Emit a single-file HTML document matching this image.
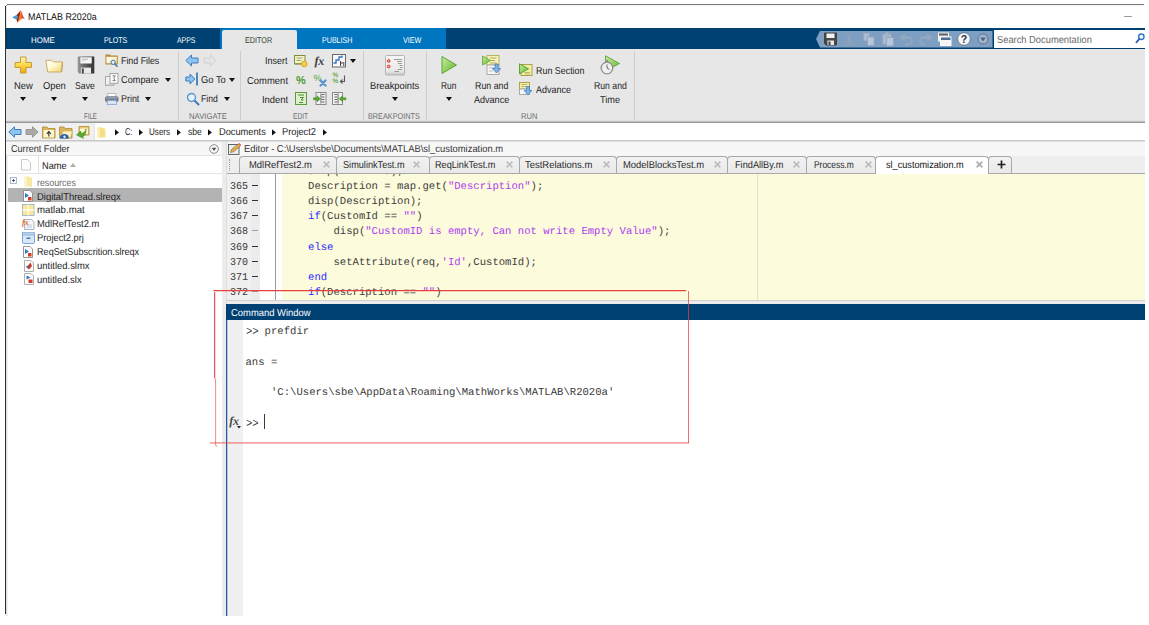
<!DOCTYPE html>
<html>
<head>
<meta charset="utf-8">
<title>MATLAB R2020a</title>
<style>
html,body{margin:0;padding:0;background:#fff;}
body{width:1149px;height:625px;position:relative;overflow:hidden;font-family:"Liberation Sans",sans-serif;font-size:10px;color:#222;}
.g{position:absolute;left:0;top:0;width:0;height:0;}
.b{position:absolute;}
svg{position:absolute;overflow:visible;}
.t{position:absolute;white-space:pre;transform-origin:0 50%;text-rendering:geometricPrecision;}
.arr{position:absolute;width:0;height:0;border-left:3.5px solid transparent;border-right:3.5px solid transparent;border-top:4px solid #111;}
.sep{position:absolute;top:51px;width:1px;height:69px;background:#cdcdcd;}
.kw{color:#2a2aff;}
.str{color:#ad3cf2;}
</style>
</head>
<body>

<!-- ===== window frame + title bar ===== -->
<div class="g" id="titlebar">
  <div class="b" style="left:7px;top:4px;width:1137px;height:1px;background:#7a7a7a;"></div>
  <div class="b" style="left:6px;top:5px;width:1px;height:1px;background:#8f8f8f;z-index:6;"></div>
  <div class="b" style="left:5px;top:6px;width:1px;height:608px;background:#303030;z-index:5;"></div>
  <div class="b" style="left:6px;top:5px;width:1139px;height:1px;background:#f4f4f4;"></div>
  <div class="b" style="left:6px;top:6px;width:1px;height:22px;background:#e8e8e8;"></div>
  <svg style="left:12px;top:9px" width="14" height="14" viewBox="0 0 14 14">
    <path d="M0.200 8.200 L4.500 6 L6 7.500 L4.500 10.600 L2 9.600 Z" fill="#4a9bd8"/>
    <path d="M4.500 6 C6.500 4.500 7.800 2.500 8.600 1 L8.300 7 L6.500 11.500 L5.300 13.500 L4.500 10.600 L6 7.500 Z" fill="#8e2418"/>
    <path d="M8.600 1 L10.200 7 L8.200 11 C7 12.500 6 13.500 5.300 13.500 C7 10 8 5 8.600 1 Z" fill="#f0892a"/>
    <path d="M8.600 1 C9.800 3.500 11 7.500 13 10.600 C11.800 9.800 11 9 10.200 9.300 L8.200 11 L9.600 7 Z" fill="#d9482c"/>
  </svg>
  <div class="t" style="left:28.0px;top:11.1px;font-size:9.7px;line-height:13px;color:#101010;transform:scaleX(0.919);">MATLAB R2020a</div>
  <div class="b" style="left:1124px;top:15.5px;width:8px;height:1px;background:#9c9c9c;"></div>
</div>

<!-- ===== toolstrip tab bar ===== -->
<div class="g" id="tabbar">
  <div class="b" style="left:6px;top:28px;width:1139px;height:21px;background:#004174;"></div>
  <div class="b" style="left:220px;top:28px;width:226px;height:21px;background:#0076c0;"></div>
  <div class="b" style="left:222px;top:30px;width:75px;height:19px;background:#e7e7e7;border-radius:2px 2px 0 0;"></div>
  <div class="t" style="left:30.8px;top:34.9px;font-size:8.4px;line-height:11px;color:#ffffff;transform:scaleX(0.949);">HOME</div><div class="t" style="left:103.8px;top:34.9px;font-size:8.4px;line-height:11px;color:#ffffff;transform:scaleX(0.849);">PLOTS</div><div class="t" style="left:176.8px;top:34.9px;font-size:8.4px;line-height:11px;color:#ffffff;transform:scaleX(0.820);">APPS</div><div class="t" style="left:245.4px;top:34.9px;font-size:8.4px;line-height:11px;color:#3a3a3a;transform:scaleX(0.865);">EDITOR</div><div class="t" style="left:322.2px;top:34.9px;font-size:8.4px;line-height:11px;color:#ffffff;transform:scaleX(0.849);">PUBLISH</div><div class="t" style="left:402.8px;top:34.9px;font-size:8.4px;line-height:11px;color:#ffffff;transform:scaleX(0.856);">VIEW</div>
  <!-- quick access toolbar -->
  <svg style="left:814px;top:30px" width="180" height="19" viewBox="0 0 180 19">
    <path d="M2 9 L6 1 H178.500 V17.500 H6 Z" fill="#7f9fc2"/>
    <!-- save -->
    <g transform="translate(10,2.500)">
      <path d="M0.500 0.500 H12.500 V12.500 H2 L0.500 11 Z" fill="#4a4a4a" stroke="#333" stroke-width="0.800"/>
      <rect x="2.500" y="1" width="8" height="4.500" fill="#f2f2f2"/>
      <rect x="3.500" y="8" width="6.500" height="4.500" fill="#e6e6e6"/>
      <rect x="4.500" y="9" width="2" height="3.500" fill="#444"/>
    </g>
    <!-- cut -->
    <g transform="translate(30,3)" stroke="#90a4bc" stroke-width="1.200" fill="none">
      <path d="M7.500 0 L3.500 9 M3 0.500 L6.800 9"/><circle cx="2.800" cy="10.800" r="1.800"/><circle cx="7.800" cy="10.800" r="1.800"/>
    </g>
    <!-- copy -->
    <g transform="translate(49,2.500)" fill="#a9bbd0" stroke="#8fa3bb" stroke-width="0.800">
      <rect x="0.500" y="0.500" width="6" height="8"/><rect x="4.500" y="4.500" width="6.500" height="8.500" fill="#b7c7d9"/>
    </g>
    <!-- paste -->
    <g transform="translate(68,2)" fill="#a9bbd0" stroke="#8fa3bb" stroke-width="0.800">
      <rect x="0.500" y="2" width="9" height="10.500"/><rect x="3" y="0.500" width="4" height="2.500"/><rect x="4.500" y="5.500" width="7" height="8.500" fill="#b7c7d9"/>
    </g>
    <!-- undo -->
    <g transform="translate(86,3.500)" fill="none" stroke="#93a8c0" stroke-width="1.800">
      <path d="M3 4 H8.500 A3.500 3.500 0 0 1 8.500 11 H5"/><path d="M4.500 0.800 L1 4 L4.500 7.200" stroke-width="1.400" fill="#93a8c0"/>
    </g>
    <!-- redo -->
    <g transform="translate(104,3.500)" fill="none" stroke="#93a8c0" stroke-width="1.800">
      <path d="M10.500 4 H5.500 A3.500 3.500 0 0 0 5.500 11 H7"/><path d="M9.500 0.800 L13 4 L9.500 7.200" stroke-width="1.400" fill="#93a8c0"/>
    </g>
    <!-- windows -->
    <g transform="translate(124,2.500)">
      <rect x="0.500" y="0.500" width="10" height="8" fill="#e9e9e9" stroke="#f6f6f6"/>
      <rect x="1" y="1" width="9" height="2" fill="#5f5f5f"/>
      <rect x="2.500" y="4.500" width="10.500" height="8.500" fill="#f3f3f3" stroke="#fafafa"/>
      <rect x="3" y="5" width="9.500" height="2.500" fill="#4f6f9a"/>
    </g>
    <!-- help -->
    <g transform="translate(143,2)">
      <circle cx="7" cy="7" r="6.300" fill="#f7f7f7" stroke="#5b6b80" stroke-width="0.800"/>
      <text x="7" y="10.800" text-anchor="middle" font-family="Liberation Sans, sans-serif" font-weight="bold" font-size="10.500" fill="#1c2f50">?</text>
    </g>
    <!-- dropdown -->
    <g transform="translate(163.500,3.500)">
      <circle cx="5.500" cy="5.500" r="5" fill="#a3b6cc" stroke="#5e7592" stroke-width="1"/>
      <path d="M2.800 4 H8.200 L5.500 8 Z" fill="#4e6482"/>
    </g>
  </svg>
  <!-- search box -->
  <div class="b" style="left:994px;top:30px;width:151px;height:17.500px;background:#fff;"></div>
  <div class="t" style="left:996.8px;top:34.2px;font-size:10.2px;line-height:13px;color:#6a6a6a;transform:scaleX(0.915);">Search Documentation</div>
  <svg style="left:1135px;top:33px" width="10" height="11" viewBox="0 0 10 11">
    <circle cx="6.300" cy="3.800" r="2.700" fill="none" stroke="#2f79c7" stroke-width="1.500"/>
    <path d="M4.200 6.200 L1.400 9.300" stroke="#2f5fae" stroke-width="1.800" stroke-linecap="round"/>
  </svg>
  <div class="b" style="left:1145px;top:0;width:4px;height:625px;background:#fff;"></div>
</div>

<!-- ===== toolstrip (EDITOR tab) ===== -->
<div class="g" id="toolstrip">
  <div class="b" style="left:6px;top:49px;width:1139px;height:72px;background:#e7e7e7;"></div>
  <div class="b" style="left:6px;top:120px;width:1139px;height:1px;background:#e0e0e0;"></div>
  <div class="b" style="left:6px;top:121px;width:1139px;height:1px;background:#bdbdbd;"></div>
  <div class="b" style="left:6px;top:122px;width:1139px;height:1px;background:#9a9a9a;"></div>

  <!-- FILE -->
  <div class="g" id="grp-file">
    <svg style="left:14px;top:56px" width="19" height="18" viewBox="0 0 19 18">
      <defs><linearGradient id="gy" x1="0" y1="0" x2="0" y2="1"><stop offset="0" stop-color="#fff6c0"/><stop offset="0.500" stop-color="#fbd84a"/><stop offset="1" stop-color="#e9a90c"/></linearGradient></defs>
      <path d="M6.500 1 H12 V6.500 H17.500 V11.500 H12 V17 H6.500 V11.500 H1 V6.500 H6.500 Z" fill="url(#gy)" stroke="#c99a35" stroke-width="1" stroke-linejoin="round"/>
    </svg>
    <svg style="left:45px;top:59px" width="19" height="14" viewBox="0 0 19 14">
      <defs><linearGradient id="gf" x1="0" y1="0" x2="1" y2="1"><stop offset="0" stop-color="#ffffff"/><stop offset="0.450" stop-color="#fff8cf"/><stop offset="1" stop-color="#efd36c"/></linearGradient></defs>
      <path d="M16.200 3.200 H18 L17.200 13 H15.800 Z" fill="#b99550"/>
      <path d="M0.900 1.300 H6.800 L8.300 2.900 H17.300 L16.200 13 H2.700 Z" fill="url(#gf)" stroke="#c7a555" stroke-width="0.900" stroke-linejoin="round"/>
    </svg>
    <svg style="left:76.500px;top:56px" width="18" height="18" viewBox="0 0 18 18">
      <defs><linearGradient id="gs" x1="0" y1="0" x2="1" y2="0"><stop offset="0" stop-color="#9a9a9a"/><stop offset="0.350" stop-color="#6a6a6a"/><stop offset="1" stop-color="#333333"/></linearGradient></defs>
      <path d="M0.700 0.500 H17.300 V17.500 H2.200 L0.700 16 Z" fill="url(#gs)"/>
      <rect x="3.300" y="1.300" width="11.400" height="6.200" fill="#f7f7f7"/>
      <rect x="4.600" y="2.800" width="6.500" height="0.900" fill="#b0b0b0"/>
      <rect x="4.600" y="4.600" width="4" height="0.800" fill="#cfcfcf"/>
      <rect x="3.800" y="11.600" width="10.200" height="5.900" fill="#e9e9e9"/>
      <rect x="4.800" y="12.400" width="2" height="5.100" fill="#4a4a4a"/>
    </svg>
<div class="t" style="left:13.8px;top:80.0px;font-size:10.0px;line-height:13px;color:#1e1e1e;transform:scaleX(0.939);">New</div><div class="t" style="left:42.8px;top:80.0px;font-size:10.0px;line-height:13px;color:#1e1e1e;transform:scaleX(0.932);">Open</div><div class="t" style="left:74.8px;top:80.0px;font-size:10.0px;line-height:13px;color:#1e1e1e;transform:scaleX(0.869);">Save</div><div class="arr" style="left:20px;top:97px;"></div><div class="arr" style="left:51px;top:97px;"></div><div class="arr" style="left:82px;top:97px;"></div>
    <svg style="left:105px;top:53.500px" width="14" height="13" viewBox="0 0 14 13">
      <defs><linearGradient id="gff" x1="0" y1="0" x2="1" y2="1"><stop offset="0" stop-color="#ffffff"/><stop offset="1" stop-color="#f6e39a"/></linearGradient></defs>
      <path d="M0.400 0.500 H5 L6 1.600 H12.800 V10.400 H0.400 Z" fill="#b98d3d"/>
      <path d="M1.400 2.800 H11.800 V9.300 H1.400 Z" fill="url(#gff)"/>
      <circle cx="8.200" cy="8.300" r="2.100" fill="#e3f0fb" stroke="#3b78b8" stroke-width="1"/>
      <path d="M9.900 10 L12 12.200" stroke="#3b78b8" stroke-width="1.500" stroke-linecap="round"/>
    </svg>
<div class="t" style="left:121.3px;top:55.2px;font-size:10.0px;line-height:13px;color:#1e1e1e;transform:scaleX(0.883);">Find Files</div>
    <svg style="left:105px;top:72.500px" width="14" height="14" viewBox="0 0 14 14">
      <rect x="0.500" y="3.500" width="8.500" height="9" fill="#f1f1f1" stroke="#a3a3a3" stroke-width="0.900"/>
      <rect x="1.500" y="11" width="6.500" height="1.500" fill="#c9c9c9"/>
      <rect x="5" y="0.500" width="8" height="9.800" fill="#fbfbfb" stroke="#9a9a9a" stroke-width="0.900"/>
      <path d="M7.500 2.800 H10.300 L8.600 5.200 L10.300 7.600 H7.500" fill="none" stroke="#6f6f6f" stroke-width="0.900"/>
    </svg>
<div class="t" style="left:121.3px;top:74.3px;font-size:10.0px;line-height:13px;color:#1e1e1e;transform:scaleX(0.919);">Compare</div><div class="arr" style="left:164.5px;top:78px;"></div>
    <svg style="left:105px;top:92.500px" width="14" height="12" viewBox="0 0 14 12">
      <rect x="2.800" y="0.400" width="8" height="4" fill="#ffffff" stroke="#9fb0c4" stroke-width="0.800"/>
      <rect x="0.500" y="3.700" width="12.600" height="5" rx="1.300" fill="#76808f" stroke="#5f6978" stroke-width="0.700"/>
      <rect x="1.200" y="4.400" width="11.200" height="1" fill="#a9b3c1"/>
      <rect x="2.300" y="7.600" width="9" height="4" fill="#d7e6f5" stroke="#86a6c9" stroke-width="0.800"/>
    </svg>
<div class="t" style="left:121.3px;top:93.3px;font-size:10.0px;line-height:13px;color:#1e1e1e;transform:scaleX(0.890);">Print</div><div class="arr" style="left:145px;top:97px;"></div><div class="t" style="left:83.8px;top:110.8px;font-size:8.4px;line-height:11px;color:#6b6b6b;transform:scaleX(0.725);">FILE</div>
  </div>
  <div class="sep" style="left:178px;"></div>

  <!-- NAVIGATE -->
  <div class="g" id="grp-nav">
    <svg style="left:185px;top:54px" width="14" height="13" viewBox="0 0 14 13">
      <path d="M0.800 6.500 L6.500 1 V4 H13 V9 H6.500 V12 Z" fill="#8fc4ee" stroke="#3c7fc0" stroke-width="1" stroke-linejoin="round"/>
    </svg>
    <svg style="left:203px;top:54px" width="14" height="13" viewBox="0 0 14 13">
      <path d="M13.200 6.500 L7.500 1 V4 H1 V9 H7.500 V12 Z" fill="#e4e4e4" stroke="#d2d2d2" stroke-width="1" stroke-linejoin="round"/>
    </svg>
    <svg style="left:185px;top:72px" width="14" height="14" viewBox="0 0 14 14">
      <path d="M9.800 7 L5 2 V5 H0.800 V9 H5 V12 Z" fill="#8fc4ee" stroke="#3c7fc0" stroke-width="1" stroke-linejoin="round"/>
      <rect x="11" y="0.500" width="2" height="13" fill="#4b87c4"/>
    </svg>
<div class="t" style="left:200.8px;top:74.3px;font-size:10.0px;line-height:13px;color:#1e1e1e;transform:scaleX(0.936);">Go To</div><div class="arr" style="left:228.5px;top:78px;"></div>
    <svg style="left:185.500px;top:92px" width="14" height="14" viewBox="0 0 14 14">
      <circle cx="5.500" cy="5.500" r="4" fill="#e6f2fc" stroke="#5b96d2" stroke-width="1.400"/>
      <path d="M8.600 8.600 L12.500 12.500" stroke="#3f78b8" stroke-width="2" stroke-linecap="round"/>
    </svg>
<div class="t" style="left:200.8px;top:93.3px;font-size:10.0px;line-height:13px;color:#1e1e1e;transform:scaleX(0.864);">Find</div><div class="arr" style="left:223.5px;top:97px;"></div><div class="t" style="left:188.8px;top:110.8px;font-size:8.4px;line-height:11px;color:#6b6b6b;transform:scaleX(0.920);">NAVIGATE</div>
  </div>
  <div class="sep" style="left:240px;"></div>

  <!-- EDIT -->
  <div class="g" id="grp-edit">
<div class="t" style="left:265.4px;top:55.3px;font-size:10.0px;line-height:13px;color:#1e1e1e;transform:scaleX(0.899);">Insert</div><div class="t" style="left:246.9px;top:74.6px;font-size:10.0px;line-height:13px;color:#1e1e1e;transform:scaleX(0.946);">Comment</div><div class="t" style="left:261.8px;top:93.5px;font-size:10.0px;line-height:13px;color:#1e1e1e;transform:scaleX(0.938);">Indent</div>
    <!-- insert section -->
    <svg style="left:294px;top:54px" width="14" height="14" viewBox="0 0 14 14">
      <rect x="0.500" y="1.500" width="10.500" height="8" fill="#f2f4c8" stroke="#7c8f3c"/>
      <path d="M2.500 4 H8.500 M2.500 6.500 H7" stroke="#9aa36a" stroke-width="1"/>
      <rect x="0.500" y="9.500" width="10.500" height="1.500" fill="#a7b07c"/>
      <circle cx="10.300" cy="10" r="2.800" fill="#f7cf45" stroke="#d29d1c" stroke-width="0.800"/>
    </svg>
    <div class="t" style="left:314.500px;top:52.500px;font-family:'Liberation Serif',serif;font-style:italic;font-weight:bold;font-size:12px;line-height:16px;color:#3a3a3a;letter-spacing:-0.300px;">fx</div>
    <svg style="left:331.500px;top:54px" width="14" height="14" viewBox="0 0 14 14">
      <rect x="0.500" y="0.500" width="13" height="12.500" fill="#f8f8f8" stroke="#6a6a6a"/>
      <path d="M1.500 9 H4 V6 H7 V3 H10 V1.500" fill="none" stroke="#3f78c6" stroke-width="1.400"/>
      <path d="M8.500 7 V12 M8.500 9 H11 M11.800 8 V12" stroke="#444" stroke-width="1"/>
    </svg>
<div class="arr" style="left:350px;top:59px;"></div>
    <!-- comment icons -->
    <div class="t" style="left:295.500px;top:74px;font-weight:bold;font-size:11.500px;line-height:14px;color:#4c9a2c;transform:scaleX(0.95);">%</div>
    <div class="t" style="left:313.500px;top:72px;font-weight:bold;font-size:9px;line-height:12px;color:#86b96f;">%</div>
    <svg style="left:319px;top:78.500px" width="8" height="8" viewBox="0 0 8 8">
      <path d="M1.500 1.500 L6.500 6.500 M6.500 1.500 L1.500 6.500" stroke="#5a8fca" stroke-width="2.300" stroke-linecap="round"/>
    </svg>
    <div class="t" style="left:332.500px;top:72.500px;font-weight:bold;font-size:6.500px;line-height:6px;color:#6aaa4c;">%<br>%</div>
    <svg style="left:339px;top:75px" width="7" height="10" viewBox="0 0 7 10">
      <path d="M5.500 0.500 V6.500 H1.500 M3.500 4.500 L1.500 6.500 L3.500 8.500" fill="none" stroke="#555" stroke-width="1.100"/>
    </svg>
    <!-- indent icons -->
    <svg style="left:294.500px;top:92px" width="13" height="14" viewBox="0 0 13 14">
      <rect x="0.500" y="0.500" width="11" height="12" fill="#dff0cf" stroke="#5a9c38"/>
      <path d="M3 3 H9 M5 5.500 H8.500 L6 8 H8.500 M4 10.500 H8" fill="none" stroke="#4a8c2e" stroke-width="1"/>
    </svg>
    <svg style="left:312.500px;top:92px" width="14" height="14" viewBox="0 0 14 14">
      <rect x="3" y="0.500" width="10" height="12" fill="#f1f1f1" stroke="#8a8a8a"/>
      <path d="M9 2.500 H11.500 M9 5 H11.500 M9 7.500 H11.500 M9 10 H11.500 M8 1.500 V11.500" stroke="#555" stroke-width="0.900"/>
      <path d="M0.500 5.800 H4 V3.800 L7.500 6.800 L4 9.800 V7.800 H0.500 Z" fill="#5aa832" stroke="#3f8a22" stroke-width="0.500"/>
    </svg>
    <svg style="left:331.500px;top:92px" width="15" height="14" viewBox="0 0 15 14">
      <rect x="0.500" y="0.500" width="10" height="12" fill="#f1f1f1" stroke="#8a8a8a"/>
      <path d="M2.500 2.500 H5 M2.500 5 H5 M2.500 7.500 H5 M2.500 10 H5 M6 1.500 V11.500" stroke="#555" stroke-width="0.900"/>
      <path d="M14 5.800 H10.500 V3.800 L7 6.800 L10.500 9.800 V7.800 H14 Z" fill="#5aa832" stroke="#3f8a22" stroke-width="0.500"/>
    </svg>
<div class="t" style="left:292.5px;top:110.8px;font-size:8.4px;line-height:11px;color:#6b6b6b;transform:scaleX(0.793);">EDIT</div>
  </div>
  <div class="sep" style="left:363px;"></div>


  <!-- BREAKPOINTS -->
  <div class="g" id="grp-bp">
    <svg style="left:385px;top:55px" width="21" height="21" viewBox="0 0 21 21">
      <defs><linearGradient id="gb" x1="0" y1="0" x2="0" y2="1"><stop offset="0" stop-color="#f6f6f6"/><stop offset="0.800" stop-color="#e9e9e9"/><stop offset="1" stop-color="#c4c4c4"/></linearGradient></defs>
      <rect x="0.500" y="0.500" width="19" height="19.500" rx="1" fill="url(#gb)" stroke="#b4b4b4"/>
      <circle cx="3.700" cy="6" r="1.400" fill="#f0a29b" stroke="#d8372c" stroke-width="0.900"/>
      <circle cx="3.700" cy="11.500" r="1.400" fill="#f0a29b" stroke="#d8372c" stroke-width="0.900"/>
      <path d="M9 4.500 H17 M12 6.500 H17 M13 8.500 H17 M14.500 10.500 H17.500 M15 12.500 H17.500 M12.500 14.500 H17 M9.500 16.500 H14" stroke="#858585" stroke-width="0.800"/>
    </svg>
<div class="t" style="left:370.3px;top:79.8px;font-size:10.0px;line-height:13px;color:#1e1e1e;transform:scaleX(0.933);">Breakpoints</div><div class="arr" style="left:392px;top:97px;"></div><div class="t" style="left:367.8px;top:110.8px;font-size:8.4px;line-height:11px;color:#6b6b6b;transform:scaleX(0.870);">BREAKPOINTS</div>
  </div>
  <div class="sep" style="left:426px;"></div>
  <!-- RUN -->
  <div class="g" id="grp-run">
    <svg style="left:441px;top:55px" width="17" height="20" viewBox="0 0 17 20">
      <defs><linearGradient id="gg" x1="0" y1="0" x2="1" y2="1"><stop offset="0" stop-color="#c9ec9c"/><stop offset="1" stop-color="#62b52e"/></linearGradient></defs>
      <path d="M1 1.500 L15.500 10 L1 18.500 Z" fill="url(#gg)" stroke="#5ca336" stroke-width="1" stroke-linejoin="round"/>
    </svg>
<div class="t" style="left:441.3px;top:79.8px;font-size:10.0px;line-height:13px;color:#1e1e1e;transform:scaleX(0.833);">Run</div><div class="arr" style="left:446px;top:97px;"></div>
    <svg style="left:482px;top:55px" width="20" height="21" viewBox="0 0 20 21">
      <rect x="5" y="0.500" width="12" height="9.500" fill="#f6f3b4" stroke="#b8b35a"/>
      <path d="M8 3 H14.500 M8 5.500 H13 M8 8 H14.500" stroke="#a8a36a" stroke-width="0.900"/>
      <rect x="5" y="10" width="12" height="9.500" fill="#f6f6f6" stroke="#a9a9a9"/>
      <path d="M7 13 H12 M7 16 H11" stroke="#b5b5b5" stroke-width="0.900"/>
      <path d="M0.500 1 L8.500 5.500 L0.500 10 Z" fill="url(#gg)" stroke="#5ca336" stroke-width="0.800"/>
      <path d="M13 9 H16 V13.500 H18.500 L14.500 18 L10.500 13.500 H13 Z" fill="#7db5e8" stroke="#3c7cc0" stroke-width="0.800"/>
    </svg>
<div class="t" style="left:475.0px;top:79.8px;font-size:10.0px;line-height:13px;color:#1e1e1e;transform:scaleX(0.883);">Run and</div><div class="t" style="left:474.4px;top:93.5px;font-size:10.0px;line-height:13px;color:#1e1e1e;transform:scaleX(0.904);">Advance</div>
    <svg style="left:519px;top:62.500px" width="14" height="14" viewBox="0 0 14 14">
      <rect x="2" y="1.500" width="11" height="11" fill="#f3efa6" stroke="#a9a548"/>
      <path d="M5 9.500 H11 M6 11 H11" stroke="#b3ae62" stroke-width="0.800"/>
      <path d="M0.500 0.800 L9.500 5.800 L0.500 10.800 Z" fill="url(#gg)" stroke="#4f9a2c" stroke-width="0.900"/>
    </svg>
<div class="t" style="left:535.5px;top:65.0px;font-size:10.0px;line-height:13px;color:#1e1e1e;transform:scaleX(0.890);">Run Section</div>
    <svg style="left:519px;top:81.500px" width="14" height="14" viewBox="0 0 14 14">
      <rect x="0.500" y="0.500" width="10" height="6.500" fill="#f3efa6" stroke="#a9a548"/>
      <path d="M2.500 2.500 H8 M2.500 4.500 H7" stroke="#a8a36a" stroke-width="0.800"/>
      <rect x="0.500" y="7" width="10" height="5.500" fill="#f6f6f6" stroke="#a9a9a9"/>
      <path d="M7.500 4.500 H10.500 V8.500 H12.800 L9 12.800 L5.200 8.500 H7.500 Z" fill="#7db5e8" stroke="#3c7cc0" stroke-width="0.800"/>
    </svg>
<div class="t" style="left:535.5px;top:84.0px;font-size:10.0px;line-height:13px;color:#1e1e1e;transform:scaleX(0.897);">Advance</div>
    <svg style="left:600px;top:55px" width="21" height="21" viewBox="0 0 21 21">
      <path d="M5.500 0.800 L19.500 8.500 L5.500 16 Z" fill="url(#gg)" stroke="#5ca336" stroke-width="0.900"/>
      <circle cx="7" cy="13" r="5.800" fill="#efefef" stroke="#8f8f8f" stroke-width="1.300"/>
      <rect x="5.800" y="5" width="2.400" height="2" fill="#8f8f8f"/>
      <path d="M7 9.500 V13 L9.500 14.500" fill="none" stroke="#666" stroke-width="1"/>
    </svg>
<div class="t" style="left:593.8px;top:79.8px;font-size:10.0px;line-height:13px;color:#1e1e1e;transform:scaleX(0.867);">Run and</div><div class="t" style="left:600.0px;top:93.5px;font-size:10.0px;line-height:13px;color:#1e1e1e;transform:scaleX(0.915);">Time</div><div class="t" style="left:520.7px;top:110.8px;font-size:8.4px;line-height:11px;color:#6b6b6b;transform:scaleX(0.900);">RUN</div>
  </div>
  <div class="sep" style="left:634px;"></div>

</div>

<!-- ===== current folder address bar ===== -->
<div class="g" id="addressbar">
  <div class="b" style="left:6px;top:123px;width:1139px;height:17px;background:#fff;"></div>
  <div class="b" style="left:6px;top:123px;width:88px;height:18px;background:#f0f0f0;"></div>
  <div class="b" style="left:94px;top:123px;width:1px;height:17px;background:#e4e4e4;"></div>
  <div class="b" style="left:6px;top:140px;width:1139px;height:1px;background:#c9c9c9;"></div>
  <div class="b" style="left:6px;top:141px;width:1139px;height:1px;background:#dcdcdc;z-index:3;"></div>
  <svg style="left:8px;top:126px" width="14" height="12" viewBox="0 0 14 12">
    <path d="M0.800 6 L6.500 0.800 V3.500 H13 V8.500 H6.500 V11.200 Z" fill="#8fc4ee" stroke="#3c7fc0" stroke-width="1" stroke-linejoin="round"/>
  </svg>
  <svg style="left:24.500px;top:126px" width="14" height="12" viewBox="0 0 14 12">
    <path d="M13.200 6 L7.500 0.800 V3.500 H1 V8.500 H7.500 V11.200 Z" fill="#a9a9a9" stroke="#989898" stroke-width="1" stroke-linejoin="round"/>
  </svg>
  <svg style="left:42px;top:125.500px" width="14" height="13" viewBox="0 0 14 13">
    <path d="M0.500 1 H5 L6 2.500 H13 V12 H0.500 Z" fill="#d9b65e" stroke="#b18a35" stroke-width="0.800"/>
    <rect x="1.500" y="4" width="10.500" height="7.500" fill="#fff7cf"/>
    <path d="M6.800 10.500 V6 M4.800 7.800 L6.800 5.500 L8.800 7.800" fill="none" stroke="#333" stroke-width="1.100"/>
  </svg>
  <svg style="left:59px;top:125.500px" width="14" height="13" viewBox="0 0 14 13">
    <path d="M0.500 1 H5 L6 2.500 H13 V12 H0.500 Z" fill="#d9b65e" stroke="#b18a35" stroke-width="0.800"/>
    <path d="M2 12 L4 5 H13.500 L11.500 12 Z" fill="#fff3bd" stroke="#c9a64f" stroke-width="0.600"/>
    <path d="M1 12.500 A4.500 4.500 0 0 1 10 12.500 Z" fill="#1f5fae"/>
    <circle cx="5.500" cy="10.800" r="1.200" fill="#e8f1fb"/>
  </svg>
  <svg style="left:76px;top:125.500px" width="14" height="13" viewBox="0 0 14 13">
    <path d="M3 0.500 H13 V9 H3 Z" fill="#e7c877" stroke="#b18a35" stroke-width="0.800"/>
    <path d="M4 2.500 H12 V8 H4 Z" fill="#fff7cf"/>
    <path d="M0.500 9 L4.500 5 L5.500 7.500 C8 7 9.500 5 10 3 C10.500 7 8.500 10.500 6.500 11 L7.500 12.500 Z" fill="#5aa832" stroke="#3f8a22" stroke-width="0.500"/>
  </svg>
  <svg style="left:96.500px;top:126.500px" width="9" height="11" viewBox="0 0 9 11">
    <path d="M0.500 0.500 H5 L6 1.500 H8.300 V10.500 H0.500 Z" fill="#f7dd83"/>
    <path d="M0.500 0.500 H3 V10.500 H0.500 Z" fill="#fbeeb5"/>
  </svg>
<svg style="left:114.5px;top:128.800px" width="4" height="7" viewBox="0 0 4 7"><path d="M0 0.200 L3.900 3.400 L0 6.600 Z" fill="#111"/></svg><div class="t" style="left:124.6px;top:126.4px;font-size:10.0px;line-height:13px;color:#1e1e1e;transform:scaleX(0.740);">C:</div><svg style="left:138.5px;top:128.800px" width="4" height="7" viewBox="0 0 4 7"><path d="M0 0.200 L3.900 3.400 L0 6.600 Z" fill="#111"/></svg><div class="t" style="left:149.0px;top:126.4px;font-size:10.0px;line-height:13px;color:#1e1e1e;transform:scaleX(0.808);">Users</div><svg style="left:177px;top:128.800px" width="4" height="7" viewBox="0 0 4 7"><path d="M0 0.200 L3.900 3.400 L0 6.600 Z" fill="#111"/></svg><div class="t" style="left:187.8px;top:126.4px;font-size:10.0px;line-height:13px;color:#1e1e1e;transform:scaleX(0.856);">sbe</div><svg style="left:208px;top:128.800px" width="4" height="7" viewBox="0 0 4 7"><path d="M0 0.200 L3.900 3.400 L0 6.600 Z" fill="#111"/></svg><div class="t" style="left:218.6px;top:126.4px;font-size:10.0px;line-height:13px;color:#1e1e1e;transform:scaleX(0.925);">Documents</div><svg style="left:272.3px;top:128.800px" width="4" height="7" viewBox="0 0 4 7"><path d="M0 0.200 L3.900 3.400 L0 6.600 Z" fill="#111"/></svg><div class="t" style="left:282.4px;top:126.4px;font-size:10.0px;line-height:13px;color:#1e1e1e;transform:scaleX(0.924);">Project2</div><svg style="left:323.2px;top:128.800px" width="4" height="7" viewBox="0 0 4 7"><path d="M0 0.200 L3.900 3.400 L0 6.600 Z" fill="#111"/></svg>
</div>

<!-- ===== Current Folder panel ===== -->
<div class="g" id="currentfolder">
  <div class="b" style="left:6px;top:141px;width:216px;height:475px;background:#fff;"></div>
  <div class="b" style="left:6px;top:141px;width:1px;height:475px;background:#dedede;"></div>
  <div class="b" style="left:7px;top:156px;width:1px;height:460px;background:#f2f2f2;"></div>
  <div class="b" style="left:6px;top:141px;width:216px;height:14px;background:#f7f7f7;"></div>
  <div class="b" style="left:6px;top:155px;width:216px;height:1px;background:#e3e3e3;"></div>
  <div class="b" style="left:6px;top:172.500px;width:216px;height:1px;background:#e6e6e6;"></div>
  <div class="b" style="left:38px;top:156px;width:1px;height:17px;background:#e0e0e0;"></div>
<div class="t" style="left:10.8px;top:142.9px;font-size:10.0px;line-height:13px;color:#333;transform:scaleX(0.909);">Current Folder</div>
  <svg style="left:209px;top:144px" width="10" height="10" viewBox="0 0 10 10">
    <circle cx="5" cy="5" r="4.300" fill="#fafafa" stroke="#7d7d7d" stroke-width="0.900"/>
    <path d="M2.600 3.800 H7.400 L5 7 Z" fill="#555"/>
  </svg>
  <svg style="left:21px;top:159px" width="10" height="12" viewBox="0 0 10 12">
    <path d="M0.500 0.500 H6.500 L9.500 3.500 V11 H0.500 Z" fill="#fdfdfd" stroke="#c3c3c3" stroke-width="0.900"/>
  </svg>
<div class="t" style="left:41.6px;top:159.6px;font-size:10.0px;line-height:13px;color:#1a1a1a;transform:scaleX(0.922);">Name</div>
  <svg style="left:70px;top:163px" width="6" height="4" viewBox="0 0 6 4"><path d="M0 4 L3 0 L6 4 Z" fill="#a9b39c"/></svg>
  <div class="b" style="left:7.500px;top:188px;width:214.500px;height:13.800px;background:#b3b3b3;"></div>
  <svg style="left:10px;top:177px" width="7" height="7" viewBox="0 0 7 7">
    <rect x="0.500" y="0.500" width="6" height="6" fill="#fff" stroke="#9aa7bd" stroke-width="0.800"/>
    <path d="M2 3.500 H5 M3.500 2 V5" stroke="#2b4f8c" stroke-width="0.900"/>
  </svg>
  <svg style="left:23.500px;top:176.1px" width="9" height="11" viewBox="0 0 9 11"><path d="M0.500 0.500 H5 L6 1.500 H8 V10.500 H0.500 Z" fill="#f9e7a4"/><path d="M0.500 0.500 H3 V10.500 H0.500 Z" fill="#fcf3cc"/></svg>
  <div class="t" style="left:37.2px;top:176.6px;font-size:10.0px;line-height:13px;color:#6a6a6a;transform:scaleX(0.884);">resources</div>
  <svg style="left:22.500px;top:190.0px" width="11" height="12" viewBox="0 0 11 12"><path d="M0.500 0.500 H7 L9.500 3 V11.500 H0.500 Z" fill="#fdfdfd" stroke="#8a8a8a" stroke-width="0.900"/><path d="M2 3 L6 5.500 L2 8 Z" fill="#2f78c8"/><rect x="5" y="7" width="3.500" height="3.500" fill="#d23a2a"/></svg>
  <div class="t" style="left:37.2px;top:190.5px;font-size:10.0px;line-height:13px;color:#1e1e1e;transform:scaleX(0.942);">DigitalThread.slreqx</div>
  <svg style="left:22px;top:203.9px" width="13" height="12" viewBox="0 0 13 12"><rect x="0.500" y="0.500" width="11.500" height="11" fill="#fbe79a" stroke="#9fb0c8" stroke-width="0.900"/><path d="M6.200 0.500 V11.500 M0.500 6 H12" stroke="#fffdf0" stroke-width="1.300"/></svg>
  <div class="t" style="left:37.2px;top:204.4px;font-size:10.0px;line-height:13px;color:#1e1e1e;transform:scaleX(0.966);">matlab.mat</div>
  <svg style="left:22px;top:217.8px" width="13" height="12" viewBox="0 0 13 12"><path d="M2.500 1.500 H9.500 L12 4 V11.500 H2.500 Z" fill="#f4f7fb" stroke="#8fa3bd" stroke-width="0.800"/><path d="M4.500 7 H10 M4.500 9 H10" stroke="#b6c3d4" stroke-width="0.800"/><text x="0" y="6.500" font-family="Liberation Serif, serif" font-style="italic" font-weight="bold" font-size="8" fill="#e0701c">fx</text></svg>
  <div class="t" style="left:37.2px;top:218.3px;font-size:10.0px;line-height:13px;color:#1e1e1e;transform:scaleX(0.933);">MdlRefTest2.m</div>
  <svg style="left:22px;top:231.7px" width="13" height="12" viewBox="0 0 13 12"><rect x="0.500" y="1.500" width="12" height="10" rx="1.200" fill="#d7e8f8" stroke="#6f9ccc" stroke-width="0.900"/><rect x="0.500" y="0.500" width="12" height="2.500" fill="#b7d3ee" stroke="#6f9ccc" stroke-width="0.600"/><rect x="4.500" y="5.500" width="4" height="1.500" fill="#4d79b0"/></svg>
  <div class="t" style="left:37.2px;top:232.2px;font-size:10.0px;line-height:13px;color:#1e1e1e;transform:scaleX(0.927);">Project2.prj</div>
  <svg style="left:22.500px;top:245.6px" width="11" height="12" viewBox="0 0 11 12"><path d="M0.500 0.500 H7 L9.500 3 V11.500 H0.500 Z" fill="#fdfdfd" stroke="#8a8a8a" stroke-width="0.900"/><path d="M2 3 L6 5.500 L2 8 Z" fill="#2f78c8"/><rect x="5" y="7" width="3.500" height="3.500" fill="#d23a2a"/></svg>
  <div class="t" style="left:37.2px;top:246.1px;font-size:10.0px;line-height:13px;color:#1e1e1e;transform:scaleX(0.910);">ReqSetSubscrition.slreqx</div>
  <svg style="left:23.500px;top:259.5px" width="11" height="12" viewBox="0 0 11 12"><path d="M0.500 0.500 H7 L9.500 3 V11.500 H0.500 Z" fill="#fdfdfd" stroke="#9a9a9a" stroke-width="0.800"/><path d="M2.500 7.500 L6.500 2.500 L8 6 L5 9.500 Z" fill="#c23c2c"/><path d="M1.500 6.500 L4 5.500 L4.500 8 Z" fill="#3f7fd0"/></svg>
  <div class="t" style="left:37.2px;top:260.0px;font-size:10.0px;line-height:13px;color:#1e1e1e;transform:scaleX(0.946);">untitled.slmx</div>
  <svg style="left:23.500px;top:273.4px" width="11" height="12" viewBox="0 0 11 12"><path d="M0.500 0.500 H7 L9.500 3 V11.500 H0.500 Z" fill="#fdfdfd" stroke="#9a9a9a" stroke-width="0.800"/><path d="M2.500 2.500 L6.500 4.500 L2.500 6.500 Z" fill="#2f78c8"/><rect x="4.500" y="6.500" width="4" height="3.500" fill="#d23a2a"/></svg>
  <div class="t" style="left:37.2px;top:273.9px;font-size:10.0px;line-height:13px;color:#1e1e1e;transform:scaleX(0.944);">untitled.slx</div>
</div>

<!-- ===== Editor panel ===== -->
<div class="g" id="editor">
  <div class="b" style="left:222px;top:141px;width:923px;height:475px;background:#ececec;"></div>
  <div class="b" style="left:227px;top:141px;width:918px;height:15px;background:#f7f7f7;"></div>
  <div class="b" style="left:226px;top:141px;width:1px;height:163px;background:#dedede;"></div>
  <div class="b" style="left:227px;top:156px;width:918px;height:17px;background:#eeeeee;"></div>
  <svg style="left:228px;top:142.500px" width="14" height="12" viewBox="0 0 14 12">
    <rect x="0.500" y="1.500" width="10.500" height="10" fill="#e9eef4" stroke="#555" stroke-width="0.900"/>
    <path d="M2.500 9.500 L3.500 6.500 L10.500 0.800 L12.500 2.800 L5.500 8.800 Z" fill="#e7b04a" stroke="#8a5a1a" stroke-width="0.600"/>
    <path d="M10.500 0.800 L12.500 2.800 L13.300 1.800 L11.500 0 Z" fill="#e2607a"/>
  </svg>
<div class="t" style="left:244.4px;top:143.4px;font-size:10.0px;line-height:13px;color:#333;transform:scaleX(0.939);">Editor - C:\Users\sbe\Documents\MATLAB\sl_customization.m</div>
  <!-- document tabs -->
  <div class="b" style="left:229px;top:159px;width:1px;height:12px;border-left:1px dotted #9a9a9a;"></div>
  <div class="b" style="left:239.0px;top:156px;width:98.0px;height:17px;background:linear-gradient(#f2f2f2,#e9e9e9);border:1px solid #a8a8a8;border-bottom:none;border-radius:4px 4px 0 0;box-sizing:border-box;"></div>
  <div class="t" style="left:249.0px;top:159.2px;font-size:10.0px;line-height:13px;color:#2a2a2a;transform:scaleX(0.943);">MdlRefTest2.m</div><svg style="left:322.5px;top:161.0px" width="7" height="7" viewBox="0 0 7 7"><path d="M0.600 0.600 L6.400 6.400 M6.400 0.600 L0.600 6.400" stroke="#bcbcbc" stroke-width="1.500"/></svg>
  <div class="b" style="left:336.0px;top:156px;width:94.0px;height:17px;background:linear-gradient(#f2f2f2,#e9e9e9);border:1px solid #a8a8a8;border-bottom:none;border-radius:4px 4px 0 0;box-sizing:border-box;"></div>
  <div class="t" style="left:342.5px;top:159.2px;font-size:10.0px;line-height:13px;color:#2a2a2a;transform:scaleX(0.916);">SimulinkTest.m</div><svg style="left:413.2px;top:161.0px" width="7" height="7" viewBox="0 0 7 7"><path d="M0.600 0.600 L6.400 6.400 M6.400 0.600 L0.600 6.400" stroke="#bcbcbc" stroke-width="1.500"/></svg>
  <div class="b" style="left:429.0px;top:156px;width:91.0px;height:17px;background:linear-gradient(#f2f2f2,#e9e9e9);border:1px solid #a8a8a8;border-bottom:none;border-radius:4px 4px 0 0;box-sizing:border-box;"></div>
  <div class="t" style="left:435.2px;top:159.2px;font-size:10.0px;line-height:13px;color:#2a2a2a;transform:scaleX(0.912);">ReqLinkTest.m</div><svg style="left:506.3px;top:161.0px" width="7" height="7" viewBox="0 0 7 7"><path d="M0.600 0.600 L6.400 6.400 M6.400 0.600 L0.600 6.400" stroke="#bcbcbc" stroke-width="1.500"/></svg>
  <div class="b" style="left:519.0px;top:156px;width:98.0px;height:17px;background:linear-gradient(#f2f2f2,#e9e9e9);border:1px solid #a8a8a8;border-bottom:none;border-radius:4px 4px 0 0;box-sizing:border-box;"></div>
  <div class="t" style="left:525.3px;top:159.2px;font-size:10.0px;line-height:13px;color:#2a2a2a;transform:scaleX(0.946);">TestRelations.m</div><svg style="left:602.5px;top:161.0px" width="7" height="7" viewBox="0 0 7 7"><path d="M0.600 0.600 L6.400 6.400 M6.400 0.600 L0.600 6.400" stroke="#bcbcbc" stroke-width="1.500"/></svg>
  <div class="b" style="left:616.0px;top:156px;width:112.0px;height:17px;background:linear-gradient(#f2f2f2,#e9e9e9);border:1px solid #a8a8a8;border-bottom:none;border-radius:4px 4px 0 0;box-sizing:border-box;"></div>
  <div class="t" style="left:622.8px;top:159.2px;font-size:10.0px;line-height:13px;color:#2a2a2a;transform:scaleX(0.941);">ModelBlocksTest.m</div><svg style="left:713.8px;top:161.0px" width="7" height="7" viewBox="0 0 7 7"><path d="M0.600 0.600 L6.400 6.400 M6.400 0.600 L0.600 6.400" stroke="#bcbcbc" stroke-width="1.500"/></svg>
  <div class="b" style="left:727.0px;top:156px;width:80.0px;height:17px;background:linear-gradient(#f2f2f2,#e9e9e9);border:1px solid #a8a8a8;border-bottom:none;border-radius:4px 4px 0 0;box-sizing:border-box;"></div>
  <div class="t" style="left:734.5px;top:159.2px;font-size:10.0px;line-height:13px;color:#2a2a2a;transform:scaleX(0.920);">FindAllBy.m</div><svg style="left:793.3px;top:161.0px" width="7" height="7" viewBox="0 0 7 7"><path d="M0.600 0.600 L6.400 6.400 M6.400 0.600 L0.600 6.400" stroke="#bcbcbc" stroke-width="1.500"/></svg>
  <div class="b" style="left:806.0px;top:156px;width:70.0px;height:17px;background:linear-gradient(#f2f2f2,#e9e9e9);border:1px solid #a8a8a8;border-bottom:none;border-radius:4px 4px 0 0;box-sizing:border-box;"></div>
  <div class="t" style="left:814.0px;top:159.2px;font-size:10.0px;line-height:13px;color:#2a2a2a;transform:scaleX(0.840);">Process.m</div><svg style="left:864.5px;top:161.0px" width="7" height="7" viewBox="0 0 7 7"><path d="M0.600 0.600 L6.400 6.400 M6.400 0.600 L0.600 6.400" stroke="#bcbcbc" stroke-width="1.500"/></svg>
  <div class="b" style="left:875.0px;top:156px;width:114.0px;height:18px;background:#ffffff;border:1px solid #a8a8a8;border-bottom:none;border-radius:4px 4px 0 0;box-sizing:border-box;"></div>
  <div class="t" style="left:885.6px;top:159.2px;font-size:10.0px;line-height:13px;color:#111;transform:scaleX(0.913);">sl_customization.m</div><svg style="left:975.7px;top:161.0px" width="7" height="7" viewBox="0 0 7 7"><path d="M0.600 0.600 L6.400 6.400 M6.400 0.600 L0.600 6.400" stroke="#a9a9a9" stroke-width="1.500"/></svg>
  <div class="b" style="left:988px;top:156px;width:24px;height:17px;background:linear-gradient(#f2f2f2,#e9e9e9);border:1px solid #a8a8a8;border-bottom:none;border-radius:4px 4px 0 0;box-sizing:border-box;"></div>
  <svg style="left:996.500px;top:160px" width="9" height="9" viewBox="0 0 9 9"><path d="M4.500 0.500 V8.500 M0.500 4.500 H8.500" stroke="#222" stroke-width="1.700"/></svg>
  <div class="b" style="left:227px;top:173px;width:649px;height:1px;background:#a9a9a9;"></div>
  <div class="b" style="left:988px;top:173px;width:157px;height:1px;background:#a9a9a9;"></div>

  <!-- code area -->
  <div class="b" id="code" style="left:227px;top:174px;width:918px;height:126px;background:#fcfbdc;overflow:hidden;"></div>
    <div class="b" style="left:227px;top:174px;width:33px;height:126px;background:#f0f0f0;"></div>
  <div class="b" style="left:251px;top:174px;width:9px;height:126px;background:#ececec;"></div>
  <div class="b" style="left:260px;top:174px;width:22px;height:126px;background:#ffffff;"></div>
  <div class="b" style="left:275px;top:174px;width:1px;height:126px;background:#9b9b9b;"></div>
  <div class="b" style="left:757px;top:174px;width:1px;height:126px;background:#e3e2cc;"></div>
  <div class="b" style="left:227px;top:300px;width:918px;height:1px;background:#cfcfcf;"></div>
  <div class="b" style="left:282px;top:174px;width:500px;height:6px;overflow:hidden;"><div class="b" style="left:-282px;top:-174px;"><div class="t" style="left:282.6px;top:164.6px;font-size:10.6px;line-height:14px;color:#3d3d3d;font-family:'Liberation Mono',monospace;">    disp(CustomId);</div></div></div>
  <div class="t" style="left:229.5px;top:179.8px;font-size:10.6px;line-height:14px;color:#3a3a3a;font-family:'Liberation Mono',monospace;transform:scaleX(0.949);">365</div><div class="b" style="left:252px;top:185px;width:6px;height:1px;background:#333333;"></div><div class="t" style="left:282.6px;top:179.8px;font-size:10.6px;line-height:14px;color:#3d3d3d;font-family:'Liberation Mono',monospace;">    Description = map.get(<span class="str">"Description"</span>);</div>
  <div class="t" style="left:229.5px;top:195.0px;font-size:10.6px;line-height:14px;color:#3a3a3a;font-family:'Liberation Mono',monospace;transform:scaleX(0.949);">366</div><div class="b" style="left:252px;top:200px;width:6px;height:1px;background:#333333;"></div><div class="t" style="left:282.6px;top:195.0px;font-size:10.6px;line-height:14px;color:#3d3d3d;font-family:'Liberation Mono',monospace;">    disp(Description);</div>
  <div class="t" style="left:229.5px;top:210.2px;font-size:10.6px;line-height:14px;color:#3a3a3a;font-family:'Liberation Mono',monospace;transform:scaleX(0.949);">367</div><div class="b" style="left:252px;top:215px;width:6px;height:1px;background:#333333;"></div><div class="t" style="left:282.6px;top:210.2px;font-size:10.6px;line-height:14px;color:#3d3d3d;font-family:'Liberation Mono',monospace;">    <span class="kw">if</span>(CustomId == <span class="str">""</span>)</div>
  <div class="t" style="left:229.5px;top:225.4px;font-size:10.6px;line-height:14px;color:#3a3a3a;font-family:'Liberation Mono',monospace;transform:scaleX(0.949);">368</div><div class="b" style="left:252px;top:230px;width:6px;height:1px;background:#a0a0a0;"></div><div class="t" style="left:282.6px;top:225.4px;font-size:10.6px;line-height:14px;color:#3d3d3d;font-family:'Liberation Mono',monospace;">        disp(<span class="str">"CustomID is empty, Can not write Empty Value"</span>);</div>
  <div class="t" style="left:229.5px;top:240.6px;font-size:10.6px;line-height:14px;color:#3a3a3a;font-family:'Liberation Mono',monospace;transform:scaleX(0.949);">369</div><div class="b" style="left:252px;top:246px;width:6px;height:1px;background:#333333;"></div><div class="t" style="left:282.6px;top:240.6px;font-size:10.6px;line-height:14px;color:#3d3d3d;font-family:'Liberation Mono',monospace;">    <span class="kw">else</span></div>
  <div class="t" style="left:229.5px;top:255.8px;font-size:10.6px;line-height:14px;color:#3a3a3a;font-family:'Liberation Mono',monospace;transform:scaleX(0.949);">370</div><div class="b" style="left:252px;top:261px;width:6px;height:1px;background:#333333;"></div><div class="t" style="left:282.6px;top:255.8px;font-size:10.6px;line-height:14px;color:#3d3d3d;font-family:'Liberation Mono',monospace;">        setAttribute(req,<span class="str">'Id'</span>,CustomId);</div>
  <div class="t" style="left:229.5px;top:271.0px;font-size:10.6px;line-height:14px;color:#3a3a3a;font-family:'Liberation Mono',monospace;transform:scaleX(0.949);">371</div><div class="b" style="left:252px;top:276px;width:6px;height:1px;background:#333333;"></div><div class="t" style="left:282.6px;top:271.0px;font-size:10.6px;line-height:14px;color:#3d3d3d;font-family:'Liberation Mono',monospace;">    <span class="kw">end</span></div>
  <div class="t" style="left:229.5px;top:286.2px;font-size:10.6px;line-height:14px;color:#3a3a3a;font-family:'Liberation Mono',monospace;transform:scaleX(0.949);">372</div><div class="b" style="left:252px;top:291px;width:6px;height:1px;background:#a0a0a0;"></div><div class="t" style="left:282.6px;top:286.2px;font-size:10.6px;line-height:14px;color:#3d3d3d;font-family:'Liberation Mono',monospace;">    <span class="kw">if</span>(Description == <span class="str">""</span>)</div>
</div>

<!-- ===== Command Window ===== -->
<div class="g" id="commandwindow">
  <div class="b" style="left:226px;top:304px;width:919px;height:312px;background:#fff;"></div>
  <div class="b" style="left:226px;top:304px;width:919px;height:16px;background:#004174;"></div>
  <div class="b" style="left:226px;top:320px;width:1px;height:296px;background:#25599b;"></div>
  <div class="b" style="left:227px;top:320px;width:1px;height:296px;background:#b9c7dc;"></div>
  <div class="b" style="left:228px;top:320px;width:15px;height:296px;background:#f0f0f0;"></div>
<div class="t" style="left:230.6px;top:306.7px;font-size:10.0px;line-height:13px;color:#ffffff;transform:scaleX(0.943);">Command Window</div><div class="t" style="left:245.5px;top:323.9px;font-size:12.6px;line-height:16px;color:#3a3a3a;font-family:'Liberation Mono',monospace;transform:scaleX(0.842);">&gt;&gt;</div><div class="t" style="left:264.6px;top:324.9px;font-size:10.6px;line-height:14px;color:#3a3a3a;font-family:'Liberation Mono',monospace;">prefdir</div><div class="t" style="left:245.5px;top:355.6px;font-size:10.6px;line-height:14px;color:#3a3a3a;font-family:'Liberation Mono',monospace;">ans =</div><div class="t" style="left:271.0px;top:386.1px;font-size:10.6px;line-height:14px;color:#3a3a3a;font-family:'Liberation Mono',monospace;">'C:\Users\sbe\AppData\Roaming\MathWorks\MATLAB\R2020a'</div><div class="t" style="left:245.5px;top:415.5px;font-size:12.6px;line-height:16px;color:#3a3a3a;font-family:'Liberation Mono',monospace;transform:scaleX(0.842);">&gt;&gt;</div>
  <div class="t" style="left:229.200px;top:414.300px;font-family:'Liberation Serif',serif;font-style:italic;font-weight:bold;font-size:12px;line-height:14px;color:#444;letter-spacing:-0.300px;">fx</div>
  <svg style="left:237px;top:426px" width="4" height="3" viewBox="0 0 4 3"><path d="M0 0 H4 L2 2.500 Z" fill="#222"/></svg>
  <div class="b" style="left:264px;top:414px;width:1px;height:15px;background:#3a3a3a;"></div>
</div>

<!-- ===== red annotation rectangle ===== -->
<svg id="annotation" style="left:0;top:0" width="1149" height="625" viewBox="0 0 1149 625">
  <path d="M213.500 290.600 H686" stroke="#e8403f" stroke-width="1.300" fill="none"/>
  <path d="M214.600 292 V378" stroke="#e8403f" stroke-opacity="0.900" stroke-width="1.200" fill="none"/>
  <path d="M214.600 378 L215.600 379 V445 Q215.600 446.300 217.200 446.300" stroke="#e8403f" stroke-opacity="0.600" stroke-width="1" fill="none"/>
  <path d="M210 442.800 H689.300" stroke="#e8403f" stroke-opacity="0.480" stroke-width="1.800" fill="none"/>
  <path d="M688.500 291 V443" stroke="#e8403f" stroke-opacity="0.750" stroke-width="1" fill="none"/>
</svg>
<!-- white outer margins -->
<div class="b" style="left:0;top:616px;width:1149px;height:9px;background:#fff;"></div>
<div class="b" style="left:1145px;top:0;width:4px;height:625px;background:#fff;"></div>

</body>
</html>
